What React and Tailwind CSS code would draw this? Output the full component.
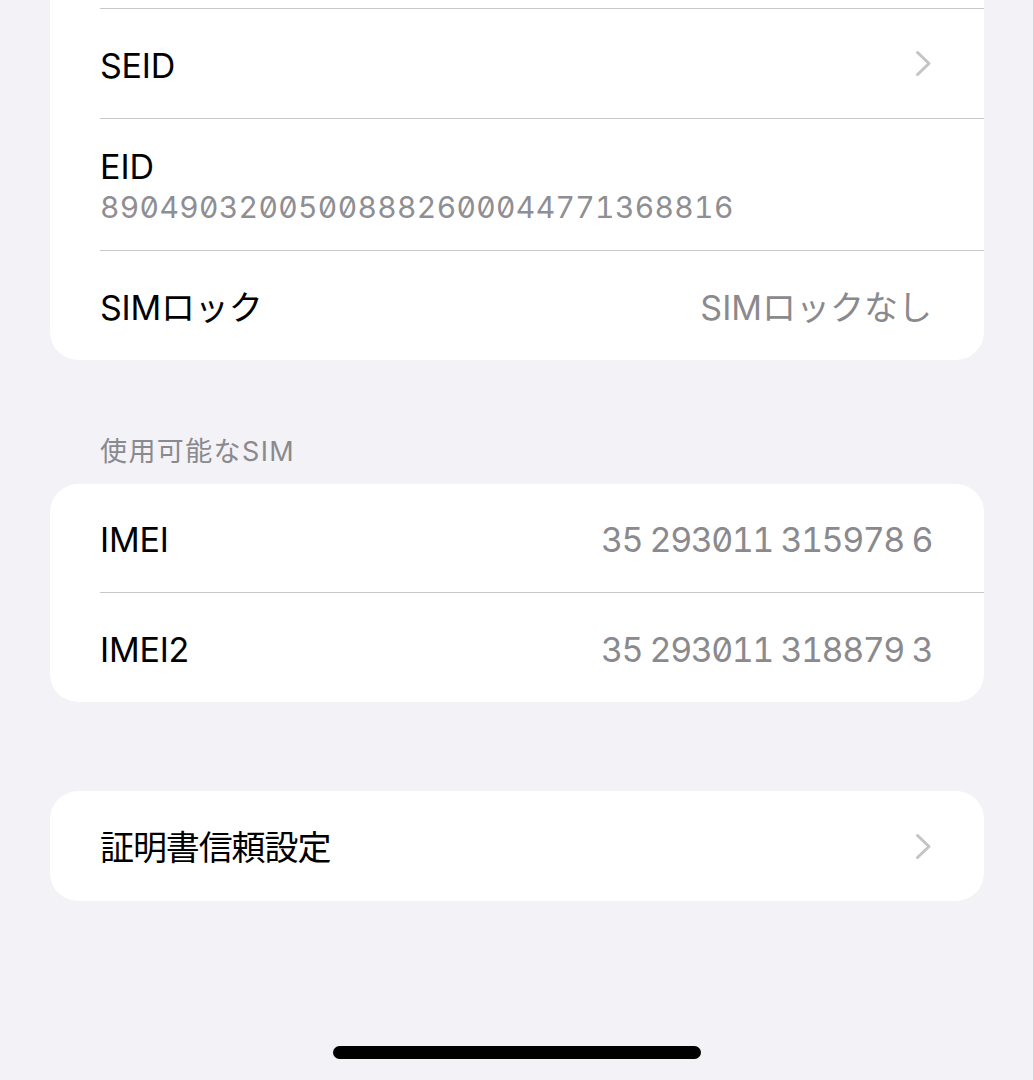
import React from 'react'

const font = { fontFamily: 'Inter, "Noto Sans CJK JP", sans-serif' }

function Chevron() {
    return (
        <svg width="17" height="27" viewBox="0 0 17 27" fill="none" className="shrink-0">
            <path d="M2.5 2.5 L14 13.5 L2.5 24.5" stroke="#c4c4c7" strokeWidth="3" strokeLinecap="round" strokeLinejoin="round" />
        </svg>
    )
}

function Separator() {
    return <div className="ml-[50px] h-px bg-[#c8c8cc]" />
}

function Row({ label, value, chevron, h = 'h-[109px]', labelClass = 'tracking-[-0.2px]', valueClass = 'tracking-[-1.5px]' }) {
    return (
        <div className={`${h} flex items-center justify-between pl-[50px] pr-[52px]`}>
            <span className={`text-[34px] text-black pt-[3px] ${labelClass}`}>{label}</span>
            {value && (
                <span className={`text-[34px] text-[#8a8a8e] pt-[3px] tabular-nums slashed-zero ${valueClass}`}>{value}</span>
            )}
            {chevron && <Chevron />}
        </div>
    )
}

export default function App() {
    return (
        <div className="min-h-screen w-[1034px] bg-[#f2f2f7] pl-[50px] pr-[49px] border-r border-[#d6d6da]" style={font}>
            {/* top card, scrolled so its top is off-screen */}
            <div className="bg-white rounded-b-[28px]">
                <div className="h-[8px]" />
                <Separator />
                <Row label="SEID" chevron />
                <Separator />
                <div className="h-[131px] flex flex-col justify-center pl-[50px] pr-[52px] pt-[2px]">
                    <span className="text-[34px] text-black leading-[42px]">EID</span>
                    <span className="text-[30px] text-[#8e8e93] leading-[38px] tabular-nums slashed-zero tracking-[0.35px]">
                        89049032005008882600044771368816
                    </span>
                </div>
                <Separator />
                <Row label="SIMロック" value="SIMロックなし" h="h-[109px]" valueClass="tracking-[0px]" />
            </div>

            <div className="pt-[76px] pb-[16px] pl-[50px] text-[27px] leading-[32px] tracking-[1.4px] text-[#8a8a8e]">
                使用可能なSIM
            </div>

            <div className="bg-white rounded-[28px]">
                <Row label="IMEI" value="35 293011 315978 6" h="h-[108px]" />
                <Separator />
                <Row label="IMEI2" value="35 293011 318879 3" h="h-[109px]" />
            </div>

            <div className="mt-[89px] bg-white rounded-[28px]">
                <Row label="証明書信頼設定" chevron h="h-[110px]" labelClass="tracking-[-1.1px]" />
            </div>

            <div className="mt-[145px] flex justify-center">
                <div className="w-[368px] h-[13px] rounded-full bg-black" />
            </div>
        </div>
    )
}
